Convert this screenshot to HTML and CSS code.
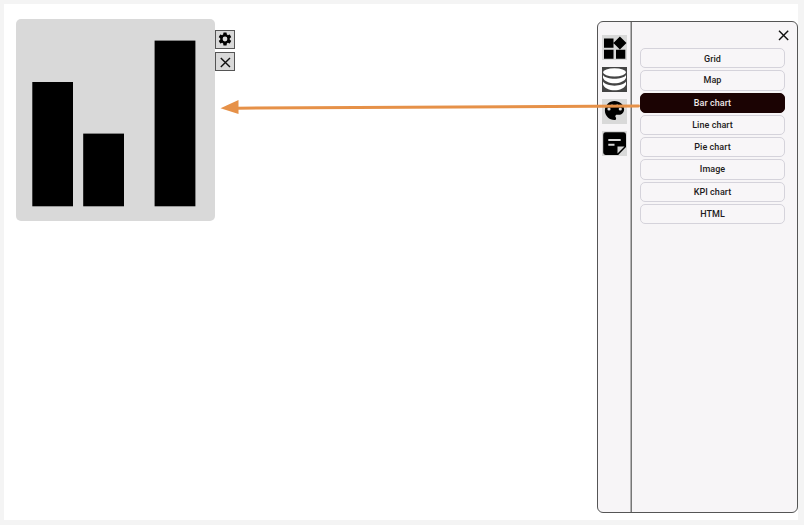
FILE: index.html
```html
<!DOCTYPE html>
<html lang="en">
<head>
<meta charset="utf-8">
<title>Widget editor</title>
<link rel="stylesheet" href="styles.css">
</head>
<body>
<main class="canvas">
  <section class="widget">
    <svg class="chart" viewBox="0 0 199.3 202">
      <rect x="16.3" y="63" width="40.7" height="124.3"/>
      <rect x="67.2" y="114.6" width="40.8" height="72.7"/>
      <rect x="138.6" y="21.6" width="40.8" height="165.7"/>
    </svg>
  </section>
  <div class="actions">
    <button class="action" aria-label="Settings">
      <svg class="gear" width="16" height="16" viewBox="0 0 24 24"><path d="M19.14 12.94c.04-.3.06-.61.06-.94s-.02-.64-.07-.94l2.03-1.58a.49.49 0 0 0 .12-.61l-1.92-3.32a.49.49 0 0 0-.59-.22l-2.39.96a7 7 0 0 0-1.62-.94l-.36-2.54A.48.48 0 0 0 13.92 2.4h-3.84a.48.48 0 0 0-.47.41l-.36 2.54a7.3 7.3 0 0 0-1.62.94l-2.39-.96a.48.48 0 0 0-.59.22L2.74 8.87a.47.47 0 0 0 .12.61l2.03 1.58c-.05.3-.09.63-.09.94s.02.64.07.94l-2.03 1.58a.49.49 0 0 0-.12.61l1.92 3.32c.12.22.37.29.59.22l2.39-.96c.5.38 1.03.7 1.62.94l.36 2.54c.05.24.24.41.48.41h3.84c.24 0 .44-.17.47-.41l.36-2.54a7.3 7.3 0 0 0 1.62-.94l2.39.96c.22.08.47 0 .59-.22l1.92-3.32a.47.47 0 0 0-.12-.61zM12 15.6a3.6 3.6 0 1 1 0-7.2 3.6 3.6 0 0 1 0 7.2z"/></svg>
    </button>
    <button class="action" aria-label="Remove">
      <svg width="12" height="12" viewBox="0 0 12 12"><path class="cross" d="M1.800 1.900 11 11.100M11 1.900 1.800 11.100"/></svg>
    </button>
  </div>

  <aside class="panel">
    <nav class="rail">
      <svg class="tool" viewBox="0 0 25 25"><path d="M2 3.500h9.500v9.200H2zM2 14.800h9.500v9H2zM14 14.800h9.300v9H14zM17.900 1.500l6.600 6.500-6.600 6.500-6.500-6.500z"/></svg>
      <svg class="tool tool-data" viewBox="0 0 25 25"><g class="discs"><ellipse cx="12.500" cy="5.300" rx="11.500" ry="4.100"/><path d="M1 8v2.800C3.500 18.100 21.500 18.100 24 10.800V8C21 13 4 13 1 8z"/><path d="M1 14.600v2.800C3.500 25.100 21.500 25.100 24 17.400v-2.800C21 20 4 20 1 14.600z"/></g></svg>
      <svg class="tool" viewBox="0 0 25 25"><path d="M12.500 2C7.200 2 2.900 6.200 2.900 11.500S7.200 21 12.500 21c.9 0 1.600-.7 1.600-1.600 0-.4-.2-.8-.4-1.100-.3-.3-.4-.6-.4-1 0-.9.700-1.600 1.600-1.600h1.900c2.900 0 5.300-2.400 5.300-5.300C22.100 5.700 17.800 2 12.500 2z"/><g class="spots"><circle cx="7" cy="10" r="1.600"/><circle cx="10" cy="6.600" r="1"/><circle cx="15.200" cy="6.600" r="1"/><circle cx="18.300" cy="10" r="1.600"/></g></svg>
      <svg class="tool" viewBox="0 0 25 25"><path d="M3.600 1.300h18A2.400 2.400 0 0 1 24 3.700V16l-7.800 8H3.600a2.400 2.400 0 0 1-2.400-2.400V3.700A2.400 2.400 0 0 1 3.600 1.300z"/><path class="lines" d="M6.300 8.900h12.400M6.300 13.800h6.200"/><path class="fold" d="M15.500 22.600v-7.100h7z"/></svg>
    </nav>
    <div class="content">
      <svg class="close" width="12" height="12" viewBox="0 0 12 12"><path class="cross" d="M2 1.800 11.200 11M11.200 1.800 2 11"/></svg>
      <div class="list">
        <button class="item">Grid</button>
        <button class="item">Map</button>
        <button class="item selected">Bar chart</button>
        <button class="item">Line chart</button>
        <button class="item">Pie chart</button>
        <button class="item">Image</button>
        <button class="item">KPI chart</button>
        <button class="item">HTML</button>
      </div>
    </div>
  </aside>
  <svg class="arrow" width="420" height="16" viewBox="0 0 420 16"><path class="shaft" d="M417.500 7 16 9.200"/><path class="head" d="M-.5 9.200 17.500 1V15z"/></svg>
</main>
</body>
</html>
```

FILE: styles.css
```css
* { box-sizing: border-box; }

body {
  margin: 0;
  height: 525px;
  padding: 4px 6px 5px 4px;
  background: #f4f4f4;
  font-family: Roboto, sans-serif;
  overflow: hidden;
}

svg { display: block; }

button {
  margin: 0;
  padding: 0;
  font: inherit;
  color: inherit;
}

.canvas {
  position: relative;
  display: flex;
  align-items: flex-start;
  height: 516px;
  padding: 15px 0 0 12px;
  background: #fff;
}

.widget {
  width: 199.3px;
  height: 202px;
  border-radius: 5px;
  background: #d9d9d9;
}

.chart {
  width: 199.3px;
  height: 202px;
}

.actions {
  display: flex;
  flex-direction: column;
  gap: 3px;
  margin: 11px 0 0 -.3px;
}

.action {
  display: flex;
  align-items: center;
  justify-content: center;
  width: 20px;
  height: 19px;
  border: 1px solid #555;
  background: #d9d9d9;
}

.gear { margin: 0 1px 1px 0; }

.cross {
  fill: none;
  stroke: #111;
  stroke-width: 1.4;
}

.panel {
  display: flex;
  width: 201px;
  height: 492.400px;
  margin: 2px 0 0 auto;
  border: 1px solid #555;
  border-radius: 6px;
  background: #f7f5f7;
}

.rail {
  display: flex;
  flex-direction: column;
  gap: 7px;
  width: 34px;
  padding: 13.400px 0 0 4px;
  border-right: 1px solid #777;
  box-shadow: inset -1px 0 #b4b3b4;
}

.tool {
  width: 25px;
  height: 25px;
  background: #d9d9d9;
}

.tool-data { background: #444; }
.discs { fill: #fff; }
.spots { fill: #d9d9d9; }
.fold { fill: #d9d9d9; }

.lines {
  stroke: #d9d9d9;
  stroke-width: 2;
}

.content {
  flex: 1;
  padding: 7px 7.600px 0 8px;
}

.close { margin: 0 0 7.300px auto; }

.list {
  display: grid;
  grid-template-rows: 20px 20px 20px 20px 20px 20px 20px 20px;
  row-gap: 2.250px;
}

.item {
  width: 145px;
  border: 1px solid #d5d3db;
  border-radius: 5px;
  background: #f8f6f8;
  color: #1d1b20;
  font-size: 9px;
  font-weight: 500;
  letter-spacing: .05px;
  line-height: 18px;
  text-align: center;
}

.item:nth-child(1) { padding-top: 1px; }
.item:nth-child(2),
.item:nth-child(6) { margin-top: -.4px; }
.item:nth-child(8) { margin-top: .2px; }

.selected {
  border-color: #1b0303;
  background: #1b0303;
  color: #eee6e6;
}

.arrow {
  position: absolute;
  left: 217px;
  top: 95px;
  overflow: visible;
}

.shaft {
  fill: none;
  stroke: #e69148;
  stroke-width: 3;
  stroke-linecap: round;
}

.head { fill: #e69148; }
```
